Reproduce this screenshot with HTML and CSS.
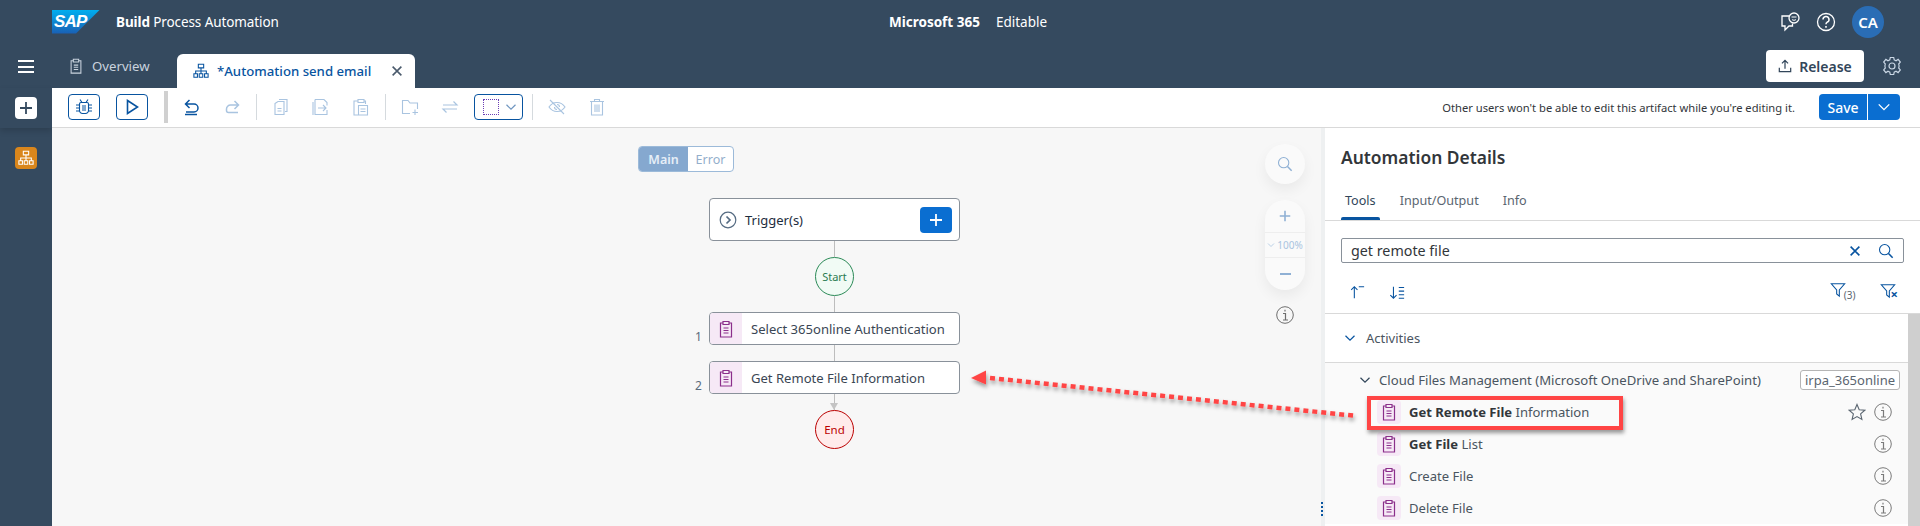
FILE: index.html
```html
<!DOCTYPE html>
<html lang="en">
<head>
<meta charset="utf-8">
<title>Automation send email</title>
<link rel="stylesheet" href="styles.css">
</head>
<body>
<svg class="sprite" aria-hidden="true">
  <symbol id="clip" viewBox="0 0 18 18"><path d="M6 3H3.5v14h11V3H12M6 1.5h6v3H6zM6.5 8h5M6.5 10.5h5M6.5 13h5" fill="none" stroke="currentColor" stroke-width="1.2"/></symbol>
  <symbol id="org" viewBox="0 0 18 18"><path d="M6 1.5h6v4H6zM9 5.5V9M3 12V9h12v3M9 9v3M1 12h4v4H1zM7 12h4v4H7zM13 12h4v4h-4z" fill="none" stroke="currentColor" stroke-width="1.2"/></symbol>
  <symbol id="x" viewBox="0 0 16 16"><path d="M3 3l10 10M13 3L3 13" fill="none" stroke="currentColor" stroke-width="1.8"/></symbol>
  <symbol id="plus" viewBox="0 0 16 16"><path d="M8 2v12M2 8h12" fill="none" stroke="currentColor" stroke-width="1.8"/></symbol>
  <symbol id="bug" viewBox="0 0 18 18"><path d="M6 4.5h6a1.5 1.5 0 0 1 1.5 1.5v6.5A3 3 0 0 1 10.500 15.500h-3a3 3 0 0 1-3-3V6A1.500 1.500 0 0 1 6 4.500zM7 8h4M7 10h4M7 12h4M5 1.500l2 3M13 1.500l-2 3M1 7h3.500M1 10h3.500M1 13h3.500M13.500 7H17M13.500 10H17M13.500 13H17" fill="none" stroke="currentColor" stroke-width="1.100"/></symbol>
  <symbol id="play" viewBox="0 0 18 18"><path d="M4.500 2.500L14.500 9l-10 6.500z" fill="none" stroke="currentColor" stroke-width="1.600"/></symbol>
  <symbol id="undo" viewBox="0 0 18 18"><path d="M6.500 2L2.500 6l4 4M2.500 6H11a4 4 0 0 1 0 8H3M2 16.500h12" fill="none" stroke="currentColor" stroke-width="1.500"/></symbol>
  <symbol id="redo" viewBox="0 0 18 18"><path d="M11.500 3l4 4-4 4M15.500 7H7.500a4 4 0 0 0-4 4v1.500a2 2 0 0 0 2 2H15" fill="none" stroke="currentColor" stroke-width="1.500"/></symbol>
  <symbol id="copy" viewBox="0 0 18 18"><path d="M7 1.500h8v12h-2M3 5.500l3-2h6v13H3zM5.500 10.500h4M5.500 13h4" fill="none" stroke="currentColor" stroke-width="1.100"/></symbol>
  <symbol id="dup" viewBox="0 0 18 18"><path d="M3 1.500h9l3 3v3M15 12v4.500H3v-15M1 4v13M6 10h8M11 7l3 3-3 3" fill="none" stroke="currentColor" stroke-width="1.100"/></symbol>
  <symbol id="paste" viewBox="0 0 18 18"><path d="M6 3H2v14h4M12 3h1.500v3M6 1.500h6v3H6zM6.500 7.500h9v9.500h-9zM8.500 11h5M8.500 13.500h5" fill="none" stroke="currentColor" stroke-width="1.100"/></symbol>
  <symbol id="folderadd" viewBox="0 0 18 18"><path d="M9 15.500H1.500v-13H7l2 2.500h7.500v6M14 11.500v5.500M11.500 14.500h5.500" fill="none" stroke="currentColor" stroke-width="1.100"/></symbol>
  <symbol id="swap" viewBox="0 0 18 18"><path d="M2 7h14L12.500 3.500M16 11H2l3.500 3.500" fill="none" stroke="currentColor" stroke-width="1.200"/></symbol>
  <symbol id="eye" viewBox="0 0 18 18"><path d="M1 9s3-4.500 8-4.500S17 9 17 9s-3 4.500-8 4.500S1 9 1 9zM2 2l14 14M6.500 9a2.500 2.500 0 0 0 2.500 2.500M9 6.500A2.500 2.500 0 0 1 11.500 9" fill="none" stroke="currentColor" stroke-width="1.100"/></symbol>
  <symbol id="trash" viewBox="0 0 18 18"><path d="M2 3.500h14M6.500 3.500V1.500h5v2M3.500 3.500V17h11V3.500M7 6.500V14M9 6.500V14M11 6.500V14" fill="none" stroke="currentColor" stroke-width="1.100"/></symbol>
  <symbol id="chev" viewBox="0 0 16 16"><path d="M2 5l6 6 6-6" fill="none" stroke="currentColor" stroke-width="1.600"/></symbol>
  <symbol id="search" viewBox="0 0 18 18"><circle cx="7.500" cy="7.500" r="5.800" fill="none" stroke="currentColor" stroke-width="1.200"/><path d="M11.800 11.800l4.700 4.700" fill="none" stroke="currentColor" stroke-width="1.700"/></symbol>
  <symbol id="info" viewBox="0 0 18 18"><circle cx="9" cy="9" r="8.300" fill="none" stroke="currentColor" stroke-width="1"/><path d="M9 3.800v1.800M7 7.500h2.500V14M7 14h5" fill="none" stroke="currentColor" stroke-width="1.200"/></symbol>
  <symbol id="star" viewBox="0 0 18 18"><path d="M9 1.500l2.200 5.200 5.600.5-4.200 3.700 1.300 5.500L9 13.600l-4.900 2.800 1.300-5.500L1.200 7.200l5.600-.5z" fill="none" stroke="currentColor" stroke-width="1.100"/></symbol>
  <symbol id="filter" viewBox="0 0 18 18"><path d="M1.500 2h15l-6 7v7l-3-2.500V9z" fill="none" stroke="currentColor" stroke-width="1.200"/></symbol>
  <symbol id="feedback" viewBox="0 0 20 20"><path d="M9 4H2v10h3v4l4-4h3.500v-2.500" fill="none" stroke="currentColor" stroke-width="1.300"/><circle cx="14" cy="6" r="5" fill="none" stroke="currentColor" stroke-width="1.300"/><path d="M11.500 5h5M12 7.500c1 1 3 1 4 0" fill="none" stroke="currentColor" stroke-width="1"/></symbol>
  <symbol id="help" viewBox="0 0 20 20"><circle cx="10" cy="10" r="8.500" fill="none" stroke="currentColor" stroke-width="1.300"/><path d="M7 7.500A3 3 0 1 1 11 10.300c-.8.400-1 1-1 2" fill="none" stroke="currentColor" stroke-width="1.500"/><path d="M10 14v1.800" fill="none" stroke="currentColor" stroke-width="1.600"/></symbol>
  <symbol id="upload" viewBox="0 0 16 16"><path d="M8 11V2M4.500 5L8 1.500 11.500 5M1.500 10v4.500h13V10" fill="none" stroke="currentColor" stroke-width="1.400"/></symbol>
  <symbol id="gear" viewBox="0 0 20 20"><circle cx="10" cy="10" r="3" fill="none" stroke="currentColor" stroke-width="1.200"/><path d="M8.300 1.500h3.400l.5 2.400 1.800.8 2.100-1.300 2.200 2.700-1.600 1.900.4 2-.4 2 1.600 1.900-2.200 2.700-2.100-1.300-1.800.8-.5 2.400H8.300l-.5-2.400-1.800-.8-2.100 1.300-2.200-2.700L3.300 12l-.4-2 .4-2-1.600-1.900L3.900 3.400 6 4.700l1.800-.8z" fill="none" stroke="currentColor" stroke-width="1.200"/></symbol>
  <symbol id="sortup" viewBox="0 0 18 18"><path d="M6 16V3M2.500 6.500L6 3l3.500 3.500M11 3h6" fill="none" stroke="currentColor" stroke-width="1.200"/></symbol>
  <symbol id="sortdown" viewBox="0 0 18 18"><path d="M5 3v13M1.500 12.500L5 16l3.500-3.500M11 4h6M11 8h6M11 12h6M11 16h6" fill="none" stroke="currentColor" stroke-width="1.200"/></symbol>
  <symbol id="chevcircle" viewBox="0 0 18 18"><circle cx="9" cy="9" r="7.800" fill="none" stroke="currentColor" stroke-width="1.200"/><path d="M7.500 5.500L11 9l-3.500 3.500" fill="none" stroke="currentColor" stroke-width="1.700"/></symbol>
</svg>

<div class="page">
  <header class="shell">
    <div class="brand">
      <div class="logo"><span class="logo-text">SAP</span></div>
      <div class="product"><b>Build</b> Process Automation</div>
    </div>
    <div class="project"><b>Microsoft 365</b><span>Editable</span></div>
    <div class="shell-actions">
      <svg class="ic20"><use href="#feedback"/></svg>
      <svg class="ic20"><use href="#help"/></svg>
      <div class="avatar">CA</div>
    </div>
  </header>

  <div class="tabrow">
    <div class="hamburger"><i></i><i></i><i></i></div>
    <div class="tab tab-plain"><svg class="ic16"><use href="#clip"/></svg>Overview</div>
    <div class="tab tab-active"><svg class="ic16"><use href="#org"/></svg><span class="tab-name">*Automation send email</span><svg class="ic14"><use href="#x"/></svg></div>
    <div class="tabrow-end">
      <div class="release"><svg class="ic14"><use href="#upload"/></svg>Release</div>
      <svg class="ic20 gear"><use href="#gear"/></svg>
    </div>
  </div>

  <div class="work">
    <aside class="rail">
      <div class="rail-top"><div class="rail-add"><svg class="ic16"><use href="#plus"/></svg></div></div>
      <div class="rail-item"><svg class="ic16"><use href="#org"/></svg></div>
    </aside>

    <main class="main">
      <div class="toolbar">
        <div class="tb-btn"><svg class="ic18"><use href="#bug"/></svg></div>
        <div class="tb-btn"><svg class="ic18"><use href="#play"/></svg></div>
        <div class="tb-thick"></div>
        <div class="tb-ic on"><svg class="ic18"><use href="#undo"/></svg></div>
        <div class="tb-ic"><svg class="ic18"><use href="#redo"/></svg></div>
        <div class="tb-sep"></div>
        <div class="tb-ic"><svg class="ic18"><use href="#copy"/></svg></div>
        <div class="tb-ic"><svg class="ic18"><use href="#dup"/></svg></div>
        <div class="tb-ic"><svg class="ic18"><use href="#paste"/></svg></div>
        <div class="tb-sep"></div>
        <div class="tb-ic"><svg class="ic18"><use href="#folderadd"/></svg></div>
        <div class="tb-ic"><svg class="ic18"><use href="#swap"/></svg></div>
        <div class="tb-select"><span class="marquee"></span><svg class="ic12"><use href="#chev"/></svg></div>
        <div class="tb-sep"></div>
        <div class="tb-ic"><svg class="ic18"><use href="#eye"/></svg></div>
        <div class="tb-ic"><svg class="ic18"><use href="#trash"/></svg></div>
        <div class="tb-note">Other users won't be able to edit this artifact while you're editing it.</div>
        <div class="save"><span class="save-l">Save</span><span class="save-r"><svg class="ic14"><use href="#chev"/></svg></span></div>
      </div>

      <div class="content">
        <section class="canvas">
          <div class="toggle"><span class="t-main">Main</span><span class="t-error">Error</span></div>

          <div class="flow">
            <div class="trigger">
              <svg class="ic18 trig-ic"><use href="#chevcircle"/></svg>
              <span class="trig-text">Trigger(s)</span>
              <span class="trig-add"><svg class="ic16"><use href="#plus"/></svg></span>
            </div>
            <div class="conn"></div>
            <div class="circle start">Start</div>
            <div class="conn"></div>
            <div class="node"><span class="num">1</span><span class="node-ic"><svg class="ic18"><use href="#clip"/></svg></span><span class="node-text">Select 365online Authentication</span></div>
            <div class="conn"></div>
            <div class="node"><span class="num">2</span><span class="node-ic"><svg class="ic18"><use href="#clip"/></svg></span><span class="node-text">Get Remote File Information</span></div>
            <div class="conn conn-arrow"></div>
            <div class="circle end">End</div>
          </div>

          <div class="zoomctl">
            <div class="zc-search"><svg class="ic16"><use href="#search"/></svg></div>
            <div class="zc-pill">
              <div class="zc-b"><svg class="ic14"><use href="#plus"/></svg></div>
              <div class="zc-pct"><svg class="ic7"><use href="#chev"/></svg>100%</div>
              <div class="zc-b zc-minus"></div>
            </div>
            <svg class="ic18 zc-info"><use href="#info"/></svg>
          </div>
          <div class="handle"></div>
        </section>
        <div class="strip"></div>

        <section class="panel">
          <h2 class="panel-title">Automation Details</h2>
          <nav class="ptabs">
            <span class="ptab active">Tools</span><span class="ptab">Input/Output</span><span class="ptab">Info</span>
          </nav>
          <div class="searchwrap">
            <div class="searchbox">
              <span class="s-val">get remote file</span>
              <svg class="ic14 s-x"><use href="#x"/></svg>
              <svg class="ic16"><use href="#search"/></svg>
            </div>
            <div class="tools">
              <svg class="ic16"><use href="#sortup"/></svg>
              <svg class="ic16"><use href="#sortdown"/></svg>
              <span class="tools-gap"></span>
              <span class="f3"><svg class="ic16"><use href="#filter"/></svg><small>(3)</small></span>
              <span class="fx"><svg class="ic16"><use href="#filter"/></svg><b>×</b></span>
            </div>
          </div>
          <div class="listwrap">
            <div class="list">
              <div class="acts"><svg class="ic12"><use href="#chev"/></svg>Activities</div>
              <div class="group">
                <div class="cloud"><svg class="ic12"><use href="#chev"/></svg><span class="cloud-t">Cloud Files Management (Microsoft OneDrive and SharePoint)</span><span class="tag">irpa_365online</span></div>
                <div class="row"><span class="row-ic"><svg class="ic18"><use href="#clip"/></svg></span><span class="row-t"><b>Get Remote File</b> Information</span><svg class="ic18 r-star"><use href="#star"/></svg><svg class="ic18 r-info"><use href="#info"/></svg></div>
                <div class="row"><span class="row-ic"><svg class="ic18"><use href="#clip"/></svg></span><span class="row-t"><b>Get File</b> List</span><svg class="ic18 r-info"><use href="#info"/></svg></div>
                <div class="row"><span class="row-ic"><svg class="ic18"><use href="#clip"/></svg></span><span class="row-t">Create File</span><svg class="ic18 r-info"><use href="#info"/></svg></div>
                <div class="row"><span class="row-ic"><svg class="ic18"><use href="#clip"/></svg></span><span class="row-t">Delete File</span><svg class="ic18 r-info"><use href="#info"/></svg></div>
              </div>
            </div>
            <div class="scroll"></div>
          </div>
        </section>
      </div>
    </main>
  </div>

  <div class="redbox"></div>
  <svg class="annot" viewBox="0 0 1920 526" aria-hidden="true">
    <defs><filter id="sh" x="-5%" y="-50%" width="110%" height="250%"><feDropShadow dx="1" dy="3" stdDeviation="2" flood-color="#000" flood-opacity=".4"/></filter></defs>
    <g filter="url(#sh)">
      <path d="M990 378L1357 416" fill="none" stroke="#ff4545" stroke-width="4.500" stroke-dasharray="5 4"/>
      <path d="M971 378l15-7.500v14z" fill="#ff4545"/>
    </g>
  </svg>
</div>
</body>
</html>
```
FILE: styles.css
```css
* { box-sizing: border-box; }
html, body { margin: 0; height: 100%; overflow: hidden; }
body { font-family: "Noto Sans", "Liberation Sans", sans-serif; font-size: 14px; color: #32363a; background: #354a5f; }
.sprite { display: none; }
svg { display: block; flex: none; }
.ic7 { width: 8px; height: 8px; }
.ic12 { width: 12px; height: 12px; }
.ic14 { width: 14px; height: 14px; }
.ic16 { width: 16px; height: 16px; }
.ic18 { width: 18px; height: 18px; }
.ic20 { width: 20px; height: 20px; }

.page { position: relative; width: 1920px; height: 526px; overflow: hidden; display: flex; flex-direction: column; }

/* shell */
.shell { height: 44px; flex: none; display: grid; grid-template-columns: 1fr auto 1fr; align-items: center; color: #fff; padding-left: 52px; padding-right: 36px; }
.brand { display: flex; align-items: center; gap: 16px; }
.logo { position: relative; width: 48px; height: 24px; margin-top: -1px; }
.logo::before { content: ""; position: absolute; inset: 0; background: linear-gradient(#00aeef, #1a5fb4); clip-path: polygon(0 0, 100% 0, 50% 100%, 0 100%); }
.logo-text { position: absolute; left: 2px; top: 1px; font: italic bold 17px/22px "Liberation Sans", sans-serif; letter-spacing: -.8px; color: #fff; }
.product { font-size: 13.500px; letter-spacing: -.1px; }
.project { display: flex; gap: 16px; font-size: 13.500px; }
.shell-actions { display: flex; align-items: center; justify-content: flex-end; gap: 16px; }
.avatar { width: 32px; height: 32px; border-radius: 50%; background: #2a6db5; color: #fff; font-weight: 600; font-size: 15px; display: flex; align-items: center; justify-content: center; }

/* tabs */
.tabrow { height: 44px; flex: none; display: flex; align-items: flex-end; color: #c9d3de; }
.hamburger { width: 52px; height: 44px; padding: 16px 18px 0; display: flex; flex-direction: column; gap: 3.500px; }
.hamburger i { display: block; height: 2px; background: #fff; }
.tab { height: 44px; display: flex; align-items: center; gap: 8px; font-size: 13.200px; }
.tab-plain { width: 125px; padding-left: 16px; }
.tab-active { width: 238px; height: 34px; background: #fff; border-radius: 6px 6px 0 0; padding: 0 11px 0 16px; color: #0854a0; font-weight: 500; margin-top: auto; }
.tab-name { white-space: nowrap; flex: 1; }
.tab-active .ic14 { color: #4a5a6c; }
.tabrow-end { margin-left: auto; height: 44px; display: flex; align-items: center; gap: 18px; padding-right: 18px; }
.release { width: 98px; height: 32px; background: #fff; border-radius: 4px; color: #32465a; font-weight: 600; display: flex; align-items: center; justify-content: center; gap: 7px; font-size: 14px; }
.gear { color: #c9d6e4; }

/* body */
.work { flex: 1; min-height: 0; display: flex; }
.rail { width: 52px; flex: none; display: flex; flex-direction: column; align-items: center; }
.rail-top { width: 52px; height: 40px; display: flex; align-items: center; justify-content: center; box-shadow: 0 3px 6px rgba(0,0,0,.15); }
.rail-add { width: 22px; height: 22px; background: #fff; border-radius: 4px; color: #354a5f; display: flex; align-items: center; justify-content: center; }
.rail-item { width: 22px; height: 22px; margin-top: 19px; background: #d9861c; border-radius: 4px; color: #fff; display: flex; align-items: center; justify-content: center; }

.main { flex: 1; min-width: 0; display: flex; flex-direction: column; }
.toolbar { height: 40px; flex: none; background: #fff; border-bottom: 1px solid #d9d9d9; display: flex; align-items: center; padding: 0 20px 1px 16px; color: #a9c4e0; }
.tb-btn { width: 32px; height: 26px; border: 1px solid #0854a0; border-radius: 4px; color: #0854a0; display: flex; align-items: center; justify-content: center; margin-right: 16px; }
.tb-thick { width: 4px; height: 32px; background: #d0d0d0; margin-right: 4px; }
.tb-ic { width: 40px; display: flex; justify-content: center; }
.tb-ic.on { color: #0854a0; }
.tb-sep { width: 1px; height: 26px; background: #d5dade; margin: 0 4px; }
.tb-select { width: 49px; height: 26px; border: 1px solid #0854a0; border-radius: 4px; margin: 0 5px 0 4px; display: flex; align-items: center; gap: 6px; padding-left: 8px; color: #6f96c0; }
.marquee { width: 16px; height: 16px; border: 1px dotted #6a3fb5; }
.tb-note { margin-left: auto; font-size: 11.200px; color: #32363a; margin-right: 24px; white-space: nowrap; }
.save { display: flex; height: 26px; color: #fff; font-weight: 500; }
.save-l { width: 48px; background: #0a6ed1; border-radius: 4px 0 0 4px; display: flex; align-items: center; justify-content: center; font-size: 14px; }
.save-r { width: 32px; margin-left: 1px; background: #0a6ed1; border-radius: 0 4px 4px 0; display: flex; align-items: center; justify-content: center; }

.content { flex: 1; min-height: 0; display: flex; }
.canvas { position: relative; flex: 1; min-width: 0; background: #f7f7f7; padding: 70px 0 0 657px; }
.strip { width: 4px; flex: none; background: #eef0f1; }

/* overlay controls on canvas */
.toggle { position: absolute; left: 586px; top: 18px; height: 26px; width: 96px; display: flex; font-size: 12.500px; border: 1px solid #9cbad9; border-radius: 4px; background: #fff; overflow: hidden; }
.t-main { width: 49px; background: #85a8cf; color: #e6eef7; font-weight: 600; display: flex; align-items: center; justify-content: center; }
.t-error { flex: 1; color: #93aecb; display: flex; align-items: center; justify-content: center; }
.zoomctl { position: absolute; left: 1213px; top: 16px; width: 40px; display: flex; flex-direction: column; align-items: center; color: #8fb0d4; }
.zc-search { width: 40px; height: 40px; border-radius: 50%; background: #fafafa; display: flex; align-items: center; justify-content: center; box-shadow: 0 6px 14px rgba(0,0,0,.06); }
.zc-pill { margin-top: 16px; width: 40px; height: 90px; border-radius: 20px; background: #fafafa; box-shadow: 0 6px 14px rgba(0,0,0,.06); display: flex; flex-direction: column; }
.zc-b { height: 32px; display: flex; align-items: center; justify-content: center; }
.zc-minus { flex: 1; height: auto; position: relative; }
.zc-minus::before { content: ""; width: 11px; height: 2px; background: #8fb0d4; }
.zc-pct { height: 26px; border-top: 1px solid #eee; border-bottom: 1px solid #eee; display: flex; align-items: center; justify-content: center; font-size: 10px; gap: 2px; color: #a9c4e0; }
.zc-info { margin-top: 16px; color: #6e6e6e; }
.handle { position: absolute; right: -2px; top: 374px; width: 2px; height: 14px; background: repeating-linear-gradient(#0854a0 0 2px, transparent 2px 4px); }

/* flow */
.flow { width: 251px; display: flex; flex-direction: column; align-items: center; }
.trigger { width: 251px; height: 43px; flex: none; background: #fff; border: 1px solid #89919a; border-radius: 4px; display: flex; align-items: center; padding: 0 7px 0 9px; gap: 8px; color: #1d2d3e; }
.trig-ic { color: #556b82; }
.trig-text { flex: 1; font-size: 13px; }
.trig-add { width: 32px; height: 26px; border-radius: 4px; background: #0a6ed1; color: #fff; display: flex; align-items: center; justify-content: center; }
.conn { width: 1px; height: 16px; flex: none; background: #bdbdbd; }
.conn-arrow { position: relative; }
.conn-arrow::after { content: ""; position: absolute; left: -4px; bottom: 0; border-style: solid; border-width: 7px 4.500px 0; border-color: #c4c4c4 transparent transparent; }
.circle { width: 39px; height: 39px; flex: none; border-radius: 50%; display: flex; align-items: center; justify-content: center; font-size: 11px; }
.start { background: #f1fbf5; border: 1px solid #2b8a57; color: #2b7d52; }
.end { background: #ffebeb; border: 1px solid #bb0000; color: #bb0000; font-size: 11.500px; }
.node { position: relative; width: 251px; height: 33px; flex: none; background: #fff; border: 1px solid #89919a; border-radius: 4px; display: flex; align-items: center; }
.num { position: absolute; left: -15px; bottom: 0; font-size: 12px; line-height: 14px; color: #5b6b7c; }
.node-ic { width: 32px; height: 31px; background: #f6e9f6; border-radius: 3px 0 0 3px; color: #8b2f8b; display: flex; align-items: center; justify-content: center; }
.node-text { margin-left: 9px; font-size: 13.050px; color: #3a4654; white-space: nowrap; }

/* panel */
.panel { width: 595px; flex: none; background: #fff; display: flex; flex-direction: column; }
.panel-title { height: 58px; margin: 0; flex: none; padding: 0 16px; font-size: 17.400px; font-weight: 600; line-height: 58px; color: #32363a; }
.ptabs { height: 35px; flex: none; display: flex; gap: 24px; padding-left: 20px; border-bottom: 1px solid #d9d9d9; color: #5a6570; font-size: 12.600px; }
.ptab { position: relative; line-height: 30px; }
.ptab.active { color: #32465a; }
.ptab.active::after { content: ""; position: absolute; left: -4px; right: -4px; bottom: 0; height: 3px; background: #0854a0; border-radius: 2px 2px 0 0; }
.searchwrap { height: 93px; flex: none; padding: 17px 16px 0; border-bottom: 1px solid #d9d9d9; }
.searchbox { height: 25px; width: 563px; border: 1px solid #89919a; border-radius: 2px; display: flex; align-items: center; padding: 0 9px; color: #0854a0; gap: 16px; }
.s-val { flex: 1; color: #32363a; font-size: 14.300px; }
.tools { height: 50px; display: flex; align-items: center; gap: 24px; padding: 8px 6px 0 8px; color: #0854a0; }
.tools-gap { flex: 1; }
.f3, .fx { display: flex; align-items: flex-start; }
.f3 small { font-size: 10px; color: #5a6570; margin: 6px 0 0 -2px; }
.fx b { font-size: 13px; line-height: 13px; margin: 5px 0 0 -5px; font-weight: 700; }
.listwrap { flex: 1; min-height: 0; display: flex; }
.list { flex: 1; min-width: 0; }
.scroll { width: 12px; flex: none; background: #cfcfcf; }
.acts { height: 49px; display: flex; align-items: center; gap: 10px; padding-left: 19px; border-bottom: 1px solid #d9d9d9; color: #4a5560; font-size: 13px; }
.acts .ic12 { color: #0854a0; }
.group { background: #fafafa; padding-right: 4px; }
.cloud { height: 33px; display: flex; align-items: center; padding-left: 34px; font-size: 13.150px; color: #4a5560; }
.cloud .ic12 { color: #32465a; margin-right: 8px; }
.cloud-t { flex: 1; white-space: nowrap; }
.tag { width: 100px; height: 20px; border: 1px solid #b5b5b5; border-radius: 3px; text-align: center; line-height: 18px; font-size: 13px; color: #5a6570; background: #fff; white-space: nowrap; margin-right: 4px; }
.row { height: 32px; display: flex; align-items: center; padding-left: 52px; color: #4a5560; font-size: 13.050px; }
.row-ic { width: 24px; height: 24px; border-radius: 4px; background: #f6e9f6; color: #8b2f8b; display: flex; align-items: center; justify-content: center; margin-right: 8px; }
.row-t { flex: 1; white-space: nowrap; }
.row-t b { font-weight: 700; color: #32363a; }
.r-star { color: #5a6570; margin-right: 8px; }
.r-info { color: #7a7a7a; margin-right: 12px; }

/* annotations */
.redbox { position: absolute; left: 1367px; top: 396px; width: 256px; height: 34px; border: 4px solid #ff4545; box-shadow: 1px 3px 4px rgba(0,0,0,.4); }
.annot { position: absolute; inset: 0; width: 1920px; height: 526px; pointer-events: none; }
```
